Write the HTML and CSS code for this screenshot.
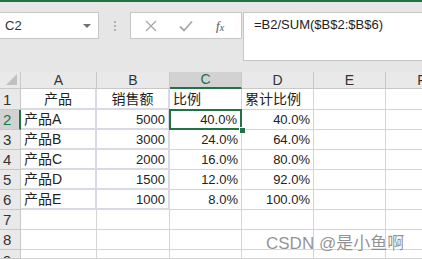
FILE: index.html
```html
<!DOCTYPE html>
<html lang="zh-CN">
<head>
    <meta charset="UTF-8">
    <meta name="viewport" content="width=device-width, initial-scale=1.0">
    <title>比例</title>
    <link rel="stylesheet" href="styles.css">
</head>
<body>
    <div class="topline"></div>
    <div class="toolbar">
        <div class="namebox">
            <span>C2</span>
            <span class="caret"></span>
        </div>
        <div class="dots"><i></i><i></i><i></i></div>
        <div class="iconbox">
            <svg class="icon" width="12" height="12" viewBox="0 0 12 12"><path d="M1 1L11 11M11 1L1 11" stroke="#a8a8a8" stroke-width="1.4" fill="none"/></svg>
            <svg class="icon" width="14" height="12" viewBox="0 0 14 12"><path d="M1 6.5L5 10.5L13 1.5" stroke="#a8a8a8" stroke-width="1.8" fill="none"/></svg>
            <span class="fx">f<sub>x</sub></span>
        </div>
        <div class="formula">=B2/SUM($B$2:$B$6)</div>
    </div>

    <div class="sheet">
        <div class="hd corner"></div>
        <div class="hd">A</div>
        <div class="hd">B</div>
        <div class="hd sel-col">C</div>
        <div class="hd">D</div>
        <div class="hd">E</div>
        <div class="hd">F</div>

        <div class="rh">1</div>
        <div class="c tb ctr zh">产品</div>
        <div class="c tb ctr zh">销售额</div>
        <div class="c zh">比例</div>
        <div class="c zh">累计比例</div>
        <div class="c"></div>
        <div class="c"></div>

        <div class="rh sel-row">2</div>
        <div class="c tb zh">产品A</div>
        <div class="c tb r">5000</div>
        <div class="c r active">40.0%</div>
        <div class="c r">40.0%</div>
        <div class="c"></div>
        <div class="c"></div>

        <div class="rh">3</div>
        <div class="c tb zh">产品B</div>
        <div class="c tb r">3000</div>
        <div class="c r">24.0%</div>
        <div class="c r">64.0%</div>
        <div class="c"></div>
        <div class="c"></div>

        <div class="rh">4</div>
        <div class="c tb zh">产品C</div>
        <div class="c tb r">2000</div>
        <div class="c r">16.0%</div>
        <div class="c r">80.0%</div>
        <div class="c"></div>
        <div class="c"></div>

        <div class="rh">5</div>
        <div class="c tb zh">产品D</div>
        <div class="c tb r">1500</div>
        <div class="c r">12.0%</div>
        <div class="c r">92.0%</div>
        <div class="c"></div>
        <div class="c"></div>

        <div class="rh">6</div>
        <div class="c tb zh">产品E</div>
        <div class="c tb r">1000</div>
        <div class="c r">8.0%</div>
        <div class="c r">100.0%</div>
        <div class="c"></div>
        <div class="c"></div>

        <div class="rh">7</div>
        <div class="c"></div>
        <div class="c"></div>
        <div class="c"></div>
        <div class="c"></div>
        <div class="c"></div>
        <div class="c"></div>

        <div class="rh">8</div>
        <div class="c"></div>
        <div class="c"></div>
        <div class="c"></div>
        <div class="c"></div>
        <div class="c"></div>
        <div class="c"></div>

        <div class="rh last">9</div>
        <div class="c"></div>
        <div class="c"></div>
        <div class="c"></div>
        <div class="c"></div>
        <div class="c"></div>
        <div class="c"></div>
    </div>

    <div class="watermark">CSDN @是小鱼啊</div>
</body>
</html>
```

FILE: styles.css
```css
body {
    margin: 0;
    width: 422px;
    height: 259px;
    overflow: hidden;
    background-color: #e6e6e6;
    font-family: "Liberation Sans", "Noto Sans CJK SC", sans-serif;
    color: #222;
    position: relative;
}
.topline {
    height: 2px;
    background-color: #217346;
}
.toolbar {
    display: flex;
    align-items: flex-start;
    height: 70px;
    padding-top: 10px;
    box-sizing: border-box;
}
.namebox {
    width: 99px;
    height: 27px;
    box-sizing: border-box;
    background-color: #fff;
    border: 1px solid #c6c6c6;
    border-left: none;
    display: flex;
    align-items: center;
    justify-content: space-between;
    padding: 0 7px 0 5px;
    font-size: 13px;
    color: #333;
}
.caret {
    width: 0;
    height: 0;
    border-left: 4px solid transparent;
    border-right: 4px solid transparent;
    border-top: 4px solid #707070;
}
.dots {
    width: 31px;
    height: 27px;
    display: flex;
    flex-direction: column;
    align-items: center;
    justify-content: center;
    gap: 2px;
}
.dots i {
    width: 2px;
    height: 2px;
    background-color: #b0b0b0;
}
.iconbox {
    width: 112px;
    height: 27px;
    box-sizing: border-box;
    background-color: #fff;
    border: 1px solid #c6c6c6;
    display: flex;
    align-items: center;
    padding-left: 14px;
    gap: 22px;
}
.fx {
    font-family: "Liberation Serif", serif;
    font-style: italic;
    font-size: 13px;
    color: #555;
    margin-left: 1px;
}
.fx sub {
    font-size: 10px;
    vertical-align: -1px;
}
.formula {
    flex: 1;
    height: 49px;
    margin-left: 1px;
    box-sizing: border-box;
    background-color: #fff;
    border: 1px solid #c6c6c6;
    border-right: none;
    padding: 4px 0 0 10px;
    font-size: 13px;
    color: #222;
}
.sheet {
    display: grid;
    width: 458px;
    grid-template-columns: 21px 76px 73px 72px 72px 72px 72px;
    grid-template-rows: 17px 21px repeat(7, 20px) 9px;
    background-color: #fff;
}
.hd {
    background-color: #e9e9e9;
    border-right: 1px solid #c8c8c8;
    border-bottom: 1px solid #c8c8c8;
    display: flex;
    align-items: flex-end;
    justify-content: center;
    font-size: 14px;
    color: #333;
    line-height: 16px;
}
.corner {
    position: relative;
}
.corner::after {
    content: "";
    position: absolute;
    right: 3px;
    bottom: 3px;
    border-left: 11px solid transparent;
    border-bottom: 11px solid #c0c0c0;
}
.hd.sel-col {
    background-color: #d2d2d2;
    border-bottom: 2px solid #217346;
    color: #217346;
}
.rh {
    background-color: #e9e9e9;
    border-right: 1px solid #c8c8c8;
    border-bottom: 1px solid #c8c8c8;
    display: flex;
    align-items: flex-end;
    padding-left: 3px;
    font-size: 15px;
    line-height: 18px;
    color: #333;
    overflow: hidden;
}
.rh.last {
    align-items: flex-start;
    padding-top: 2px;
}
.rh.sel-row {
    background-color: #d2d2d2;
    border-right: 2px solid #217346;
    color: #217346;
}
.c {
    border-right: 1px solid #d4d4d4;
    border-bottom: 1px solid #d4d4d4;
    display: flex;
    align-items: flex-end;
    padding: 0 3px 1px 3px;
    font-size: 13px;
    line-height: 17px;
    white-space: nowrap;
    overflow: hidden;
}
.c.zh {
    font-size: 14px;
}
.c.tb {
    border-right: 2px solid #d9d9e6;
    border-bottom: 2px solid #d9d9e6;
    padding-bottom: 0;
}
.c.ctr {
    justify-content: center;
}
.c.r {
    justify-content: flex-end;
}
.c.active {
    position: relative;
    overflow: visible;
    padding-right: 4px;
}
.c.active::after {
    content: "";
    position: absolute;
    left: -1px;
    top: -1px;
    right: -1px;
    bottom: -1px;
    border: 2px solid #217346;
}
.c.active::before {
    content: "";
    position: absolute;
    right: -5px;
    bottom: -5px;
    width: 5px;
    height: 5px;
    background-color: #217346;
    border: 1px solid #fff;
    z-index: 1;
}
.watermark {
    position: absolute;
    left: 266px;
    top: 229px;
    font-size: 17px;
    color: rgba(110, 110, 110, 0.75);
    text-shadow: 0 0 2px #fff;
    white-space: nowrap;
}
```
